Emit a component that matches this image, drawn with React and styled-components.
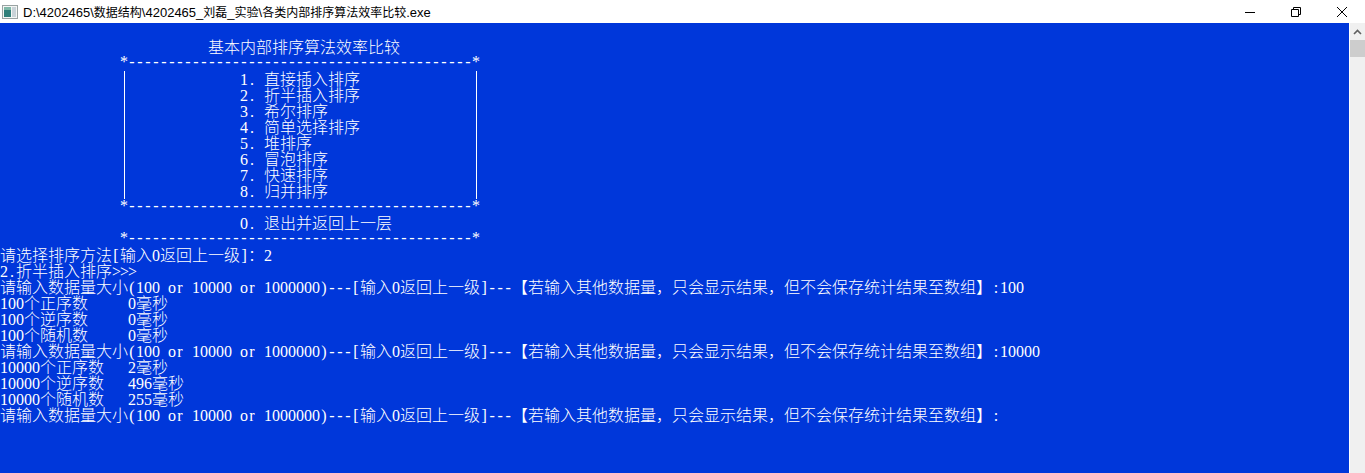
import React from "react";
import styled, { createGlobalStyle } from "styled-components";

const GlobalStyle = createGlobalStyle`
  html, body {
    margin: 0;
    padding: 0;
    height: 100%;
    overflow: hidden;
    background: #fff;
  }
`;

const Window = styled.div`
  display: flex;
  flex-direction: column;
  width: 1365px;
  height: 473px;
  overflow: hidden;
`;

const TitleBar = styled.div`
  display: flex;
  align-items: center;
  flex: 0 0 23px;
  padding-left: 2px;
  background: #fff;
`;

const TitleText = styled.div`
  flex: 1;
  margin-left: 5px;
  font: 13px "Liberation Sans", sans-serif;
  color: #000;
  white-space: nowrap;
`;

const TitleCjk = styled.span`
  font-family: "Noto Sans CJK SC", sans-serif;
  font-size: 12px;
`;

const Controls = styled.div`
  display: flex;
  align-items: center;
  height: 100%;
`;

const ControlButton = styled.div`
  display: flex;
  align-items: center;
  justify-content: center;
  width: 46px;
  height: 100%;
`;

const Body = styled.div`
  display: flex;
  flex: 1;
  min-height: 0;
`;

const Console = styled.div`
  flex: 1;
  background: #0037da;
  color: #fff;
`;

const Row = styled.div`
  height: 16px;
  line-height: 14px;
  white-space: pre;
  padding-left: ${(p) => (p.$col || 0) * 8}px;
`;

const Cell = styled.span`
  display: inline-block;
  width: 8px;
  text-align: center;
  font-family: "Liberation Serif", serif;
  font-size: 16px;
`;

const Cjk = styled.span`
  font-family: "Noto Sans CJK SC", sans-serif;
  font-size: 16px;
  font-weight: 300;
`;

const MenuFrame = styled.div`
  box-sizing: border-box;
  width: 353px;
  margin-left: 124px;
  padding-left: 115px;
  border-left: 1px solid #fff;
  border-right: 1px solid #fff;
`;

const Scrollbar = styled.div`
  display: flex;
  flex-direction: column;
  flex: 0 0 16px;
  box-sizing: border-box;
  border-left: 1px solid #fff;
  background: #f0f0f0;
`;

const ScrollArrow = styled.div`
  display: flex;
  align-items: center;
  justify-content: center;
  height: 17px;
`;

const ScrollThumb = styled.div`
  height: 17px;
  background: #cdcdcd;
`;

const menuItems = [
  "1. 直接插入排序",
  "2. 折半插入排序",
  "3. 希尔排序",
  "4. 简单选择排序",
  "5. 堆排序",
  "6. 冒泡排序",
  "7. 快速排序",
  "8. 归并排序",
];

const stars = "*" + "-".repeat(43) + "*";
const ask = "请输入数据量大小(100 or 10000 or 1000000)---[输入0返回上一级]---【若输入其他数据量，只会显示结果，但不会保存统计结果至数组】:";

const logLines = [
  "请选择排序方法[输入0返回上一级]：2",
  "2.折半插入排序>>>",
  ask + "100",
  "100个正序数     0毫秒",
  "100个逆序数     0毫秒",
  "100个随机数     0毫秒",
  ask + "10000",
  "10000个正序数   2毫秒",
  "10000个逆序数   496毫秒",
  "10000个随机数   255毫秒",
  ask,
];

const splitRuns = (text) => text.match(/[\x00-\x7f]+|[^\x00-\x7f]+/g) || [];

// ascii sits in one 8px cell and cjk takes two, like the console grid
const Line = ({ text, col }) => (
  <Row $col={col}>
    {splitRuns(text).map((run, i) =>
      run.charCodeAt(0) < 128 ? (
        [...run].map((ch, j) => <Cell key={`${i}-${j}`}>{ch}</Cell>)
      ) : (
        <Cjk key={i}>{run}</Cjk>
      )
    )}
  </Row>
);

const title = "D:\\4202465\\数据结构\\4202465_刘磊_实验\\各类内部排序算法效率比较.exe";

const AppIcon = () => (
  <svg width="16" height="16" viewBox="0 0 16 16">
    <rect x="0.5" y="1.5" width="15" height="13" fill="#f4f6f4" stroke="#9aa3a3" />
    <rect x="2" y="3" width="7" height="10" fill="#2f7f7a" />
    <rect x="2" y="3" width="7" height="3" fill="#7fb8a8" />
    <rect x="10" y="3" width="4" height="10" fill="#c9d3d8" />
  </svg>
);

const App = () => (
  <Window lang="zh-CN">
    <GlobalStyle />
    <TitleBar>
      <AppIcon />
      <TitleText>
        {splitRuns(title).map((run, i) =>
          run.charCodeAt(0) < 128 ? run : <TitleCjk key={i}>{run}</TitleCjk>
        )}
      </TitleText>
      <Controls>
        <ControlButton>
          <svg width="10" height="10" viewBox="0 0 10 10">
            <path d="M0 5.5h10" stroke="#000" />
          </svg>
        </ControlButton>
        <ControlButton>
          <svg width="10" height="10" viewBox="0 0 10 10">
            <path d="M0.5 2.5h7v7h-7zM2.5 2.5v-2h7v7h-2" fill="none" stroke="#000" />
          </svg>
        </ControlButton>
        <ControlButton>
          <svg width="10" height="10" viewBox="0 0 10 10">
            <path d="M0 0l10 10M10 0L0 10" stroke="#000" />
          </svg>
        </ControlButton>
      </Controls>
    </TitleBar>
    <Body>
      <Console>
        <Row />
        <Line col={26} text="基本内部排序算法效率比较" />
        <Line col={15} text={stars} />
        <MenuFrame>
          {menuItems.map((item) => (
            <Line key={item} text={item} />
          ))}
        </MenuFrame>
        <Line col={15} text={stars} />
        <Line col={30} text="0. 退出并返回上一层" />
        <Line col={15} text={stars} />
        {logLines.map((line, i) => (
          <Line key={i} text={line} />
        ))}
      </Console>
      <Scrollbar>
        <ScrollArrow>
          <svg width="9" height="6" viewBox="0 0 9 6">
            <path d="M1 5l3.5-3.5L8 5" fill="none" stroke="#606060" strokeWidth="1.6" />
          </svg>
        </ScrollArrow>
        <ScrollThumb />
      </Scrollbar>
    </Body>
  </Window>
);

export default App;
